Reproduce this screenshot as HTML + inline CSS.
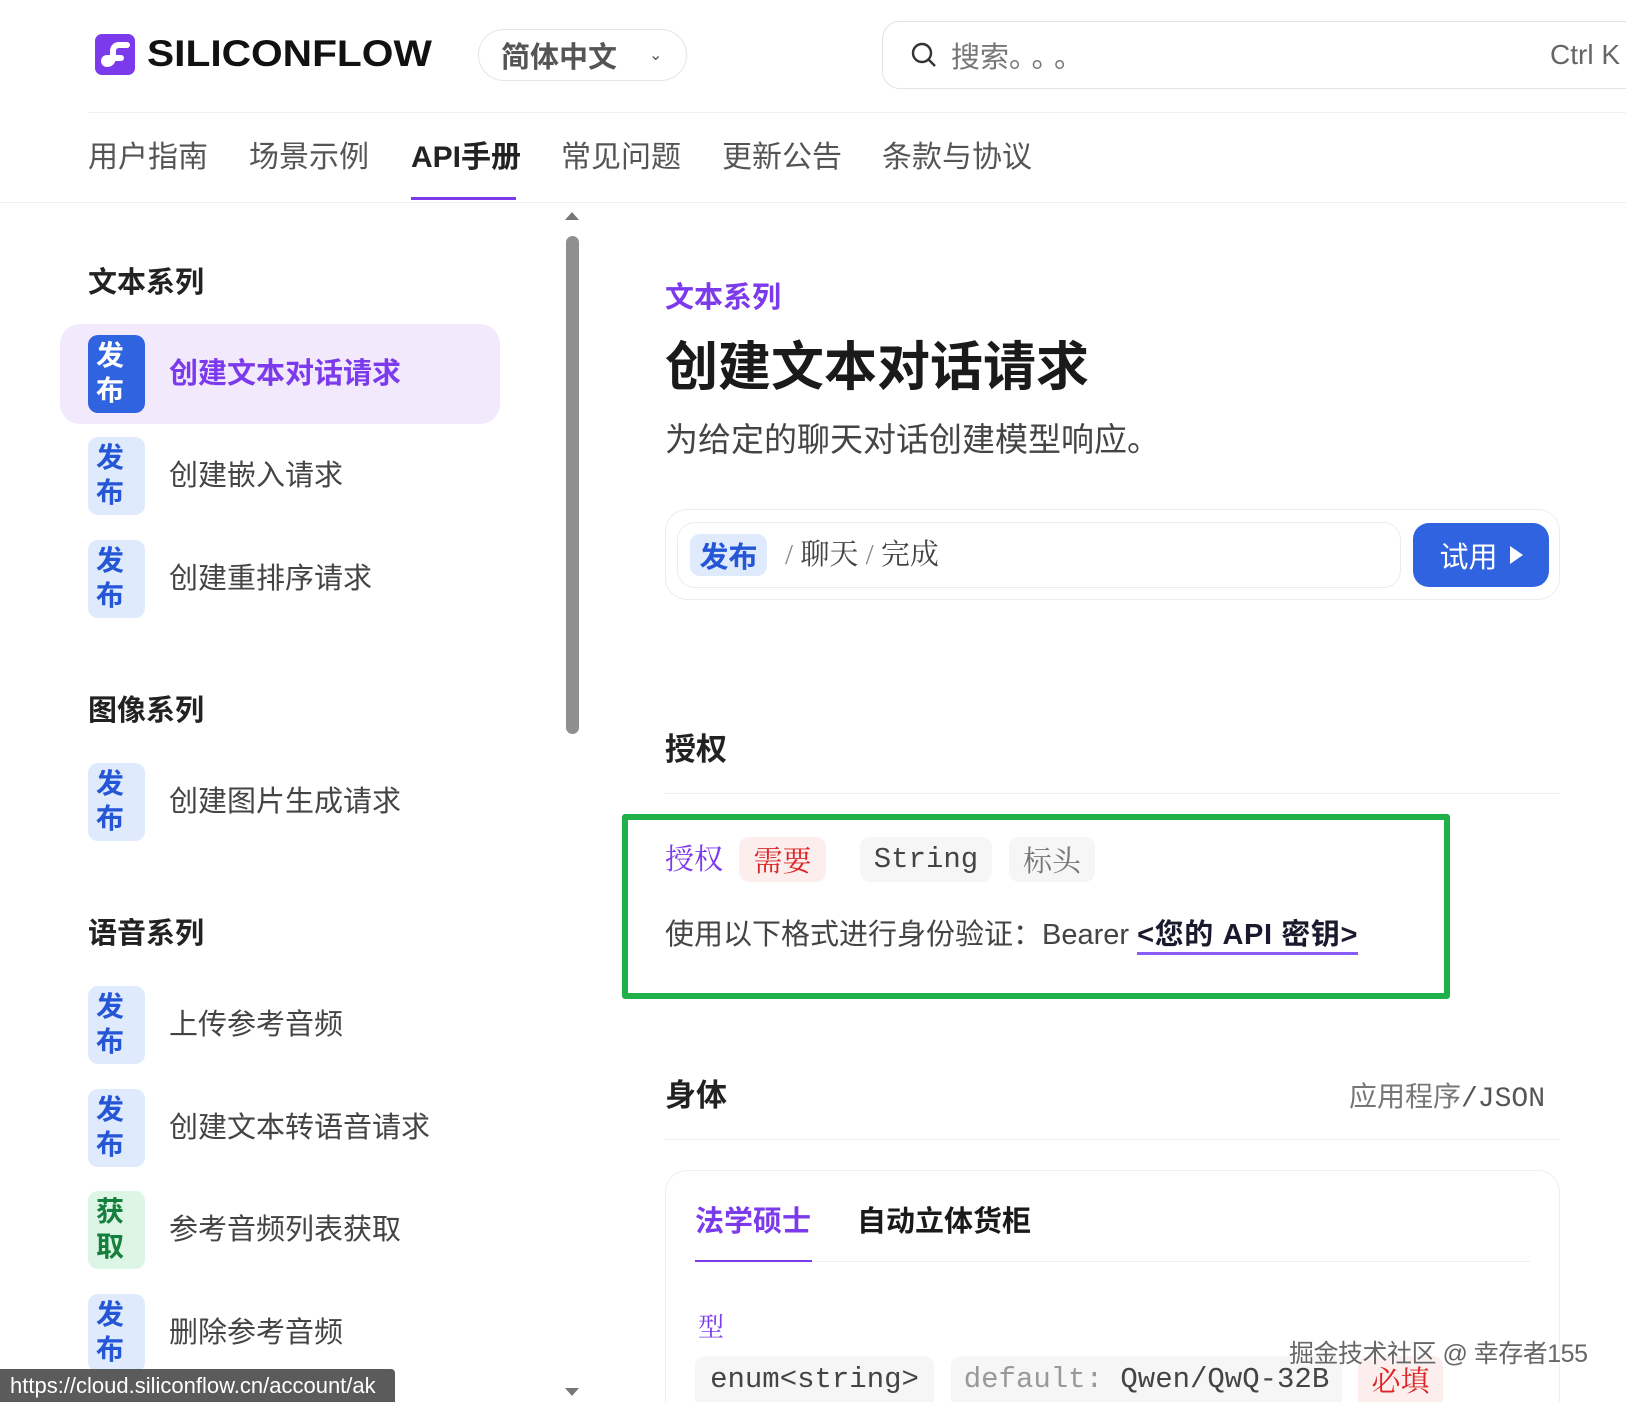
<!DOCTYPE html>
<html style="width:1626px;height:1402px;overflow:hidden"><head><meta charset="utf-8"><style>
*{margin:0;padding:0;box-sizing:border-box}
body{width:1626px;height:1402px;overflow:hidden;background:#fff;position:relative;font-family:"Liberation Sans","Noto Sans CJK SC",sans-serif;color:#333}
.a{position:absolute;white-space:nowrap}
.c{display:flex;align-items:center}
.badge{position:absolute;left:88px;width:57px;height:78px;border-radius:10px;background:#dfeafd;color:#2456d6;font-weight:700;font-size:28px;line-height:35px;text-align:left;padding-left:8px;padding-top:3px}
.item{position:absolute;left:169px;font-size:29px;color:#444;line-height:40px}
.sec{position:absolute;left:88px;font-size:29px;font-weight:700;color:#222;line-height:40px}
.mono{font-family:"Liberation Mono","DejaVu Sans Mono",monospace}
.pill{position:absolute;border-radius:10px;display:flex;align-items:center;justify-content:center}
</style></head><body>
<svg class="a" style="left:95px;top:34px" width="40" height="41" viewBox="0 0 40 41"><rect width="40" height="41" rx="7" fill="#7c3aed"/><path d="M32 11h-8c-4 0-6 3-6 6v6c0 4-2 7-6 7a3 3 0 1 1 0-6h14" fill="none" stroke="#fff" stroke-width="6" stroke-linecap="round"/></svg>
<div class="a" style="left:147px;top:31px;font-size:37px;font-weight:700;color:#111;line-height:46px;transform:scaleX(1.1);transform-origin:left">SILICONFLOW</div>
<div class="a c" style="left:478px;top:29px;width:209px;height:52px;border:1px solid #e5e5e5;border-radius:26px;padding-left:22px;font-size:29px;font-weight:700;color:#555">简体中文<span style="margin-left:32px;font-size:16px;font-weight:400">&#8964;</span></div>
<div class="a c" style="left:882px;top:21px;width:780px;height:68px;border:1px solid #e3e3e3;border-radius:18px;padding-left:28px;font-size:29px;color:#777">
<svg width="26" height="26" viewBox="0 0 26 26"><circle cx="11" cy="11" r="9" fill="none" stroke="#333" stroke-width="2.4"/><path d="M18 18l6 6" stroke="#333" stroke-width="2.4"/></svg>
<span style="margin-left:14px">搜索<span style="letter-spacing:8px">。。。</span></span><span style="position:absolute;left:667px;color:#666;font-size:28px">Ctrl K</span></div>
<div class="a" style="left:88px;top:112px;width:1538px;height:1px;background:#f0f0f0"></div>
<div class="a" style="left:88px;top:138px;font-size:30px;color:#555;line-height:40px">用户指南</div>
<div class="a" style="left:249px;top:138px;font-size:30px;color:#555;line-height:40px">场景示例</div>
<div class="a" style="left:411px;top:138px;font-size:30px;color:#222;font-weight:700;line-height:40px">API手册</div>
<div class="a" style="left:561px;top:138px;font-size:30px;color:#555;line-height:40px">常见问题</div>
<div class="a" style="left:722px;top:138px;font-size:30px;color:#555;line-height:40px">更新公告</div>
<div class="a" style="left:882px;top:138px;font-size:30px;color:#555;line-height:40px">条款与协议</div>
<div class="a" style="left:411px;top:197px;width:105px;height:3px;background:#7c3aed"></div>
<div class="a" style="left:0;top:202px;width:1626px;height:1px;background:#f0f0f0"></div>
<div class="sec" style="top:263px">文本系列</div>
<div class="a" style="left:60px;top:324px;width:440px;height:100px;border-radius:20px;background:#f3e9fd"></div>
<div class="badge" style="top:335px;background:#2f63e0;color:#fff">发<br>布</div>
<div class="item" style="top:354px;color:#7c3aed;font-weight:700">创建文本对话请求</div>
<div class="badge" style="top:437px">发<br>布</div><div class="item" style="top:456px">创建嵌入请求</div>
<div class="badge" style="top:540px">发<br>布</div><div class="item" style="top:559px">创建重排序请求</div>
<div class="sec" style="top:691px">图像系列</div>
<div class="badge" style="top:763px">发<br>布</div><div class="item" style="top:782px">创建图片生成请求</div>
<div class="sec" style="top:914px">语音系列</div>
<div class="badge" style="top:986px">发<br>布</div><div class="item" style="top:1005px">上传参考音频</div>
<div class="badge" style="top:1089px">发<br>布</div><div class="item" style="top:1108px">创建文本转语音请求</div>
<div class="badge" style="top:1191px;background:#dcf5e4;color:#15803d">获<br>取</div><div class="item" style="top:1210px">参考音频列表获取</div>
<div class="badge" style="top:1294px">发<br>布</div><div class="item" style="top:1313px">删除参考音频</div>
<div class="a" style="left:565px;top:212px;width:0;height:0;border-left:7px solid transparent;border-right:7px solid transparent;border-bottom:8px solid #777"></div>
<div class="a" style="left:566px;top:236px;width:13px;height:498px;border-radius:7px;background:#8f8f8f"></div>
<div class="a" style="left:565px;top:1388px;width:0;height:0;border-left:7px solid transparent;border-right:7px solid transparent;border-top:8px solid #777"></div>
<div class="a" style="left:665px;top:278px;font-size:29px;font-weight:700;color:#7c3aed;line-height:40px">文本系列</div>
<div class="a" style="left:665px;top:335px;font-size:53px;font-weight:700;color:#1a1a1a;line-height:66px">创建文本对话请求</div>
<div class="a" style="left:665px;top:419px;font-size:33px;color:#444;line-height:42px">为给定的聊天对话创建模型响应。</div>
<div class="a" style="left:665px;top:509px;width:895px;height:91px;border:1px solid #ececec;border-radius:22px"></div>
<div class="a" style="left:677px;top:522px;width:724px;height:66px;border:1px solid #ececec;border-radius:18px"></div>
<div class="pill" style="left:690px;top:534px;width:77px;height:42px;background:#dfeafd;color:#2456d6;font-weight:700;font-size:29px">发布</div>
<div class="a" style="left:785px;top:535px;font-size:29px;color:#444;line-height:40px;font-family:'Liberation Serif','Noto Serif CJK SC',serif"><span style="color:#888">/</span> 聊天 <span style="color:#888">/</span> 完成</div>
<div class="pill" style="left:1413px;top:523px;width:136px;height:64px;border-radius:16px;background:#2f63e0;color:#fff;font-size:29px">试用<span style="margin-left:12px;width:0;height:0;border-top:9px solid transparent;border-bottom:9px solid transparent;border-left:13px solid #fff"></span></div>
<div class="a" style="left:665px;top:730px;font-size:31px;font-weight:700;color:#222;line-height:40px">授权</div>
<div class="a" style="left:665px;top:793px;width:895px;height:1px;background:#efefef"></div>
<div class="a" style="left:622px;top:814px;width:828px;height:185px;border:6px solid #20b04a;border-radius:3px"></div>
<div class="a" style="left:665px;top:840px;font-size:29px;color:#7c3aed;line-height:40px;font-family:'Liberation Serif','Noto Serif CJK SC',serif">授权</div>
<div class="pill" style="left:739px;top:837px;width:87px;height:45px;background:#fdeeee;color:#dc2626;font-size:29px;font-family:'Liberation Serif','Noto Serif CJK SC',serif">需要</div>
<div class="pill mono" style="left:860px;top:837px;width:132px;height:45px;background:#f6f6f7;color:#444;font-size:29px">String</div>
<div class="pill" style="left:1009px;top:837px;width:86px;height:45px;background:#f6f6f7;color:#777;font-size:29px;font-family:'Liberation Serif','Noto Serif CJK SC',serif">标头</div>
<div class="a" style="left:665px;top:915px;font-size:29px;color:#444;line-height:40px">使用以下格式进行身份验证：Bearer <span style="font-weight:700;color:#1a1a2e;border-bottom:3px solid #8b5cf6;padding-bottom:1px;letter-spacing:0.6px">&lt;您的 API 密钥&gt;</span></div>
<div class="a" style="left:665px;top:1076px;font-size:31px;font-weight:700;color:#222;line-height:40px">身体</div>
<div class="a" style="right:81px;top:1077px;font-size:28px;color:#777;line-height:40px">应用程序<span class="mono" style="color:#555">/JSON</span></div>
<div class="a" style="left:665px;top:1139px;width:895px;height:1px;background:#efefef"></div>
<div class="a" style="left:665px;top:1170px;width:895px;height:232px;border:1px solid #efefef;border-bottom:none;border-radius:22px 22px 0 0"></div>
<div class="a" style="left:695px;top:1202px;font-size:29px;font-weight:700;color:#7c3aed;line-height:40px">法学硕士</div>
<div class="a" style="left:857px;top:1202px;font-size:29px;font-weight:700;color:#1a1a1a;line-height:40px">自动立体货柜</div>
<div class="a" style="left:695px;top:1261px;width:835px;height:1px;background:#efefef"></div>
<div class="a" style="left:695px;top:1260px;width:117px;height:2px;background:#7c3aed"></div>
<div class="a" style="left:698px;top:1308px;font-size:26px;color:#7c3aed;line-height:40px;font-family:'Liberation Serif','Noto Serif CJK SC',serif">型</div>
<div class="pill mono" style="left:695px;top:1356px;width:239px;height:46px;border-radius:10px 10px 0 0;background:#f6f6f7;color:#444;font-size:29px">enum&lt;string&gt;</div>
<div class="pill mono" style="left:951px;top:1356px;width:391px;height:46px;border-radius:10px 10px 0 0;background:#f6f6f7;color:#444;font-size:29px"><span style="color:#999">default:</span>&nbsp;Qwen/QwQ-32B</div>
<div class="pill" style="left:1358px;top:1356px;width:85px;height:46px;border-radius:10px 10px 0 0;background:#fdeeee;color:#dc2626;font-size:29px;font-family:'Liberation Serif','Noto Serif CJK SC',serif">必填</div>
<div class="a" style="left:1289px;top:1336px;font-size:25px;color:#666;line-height:36px;letter-spacing:-0.5px;text-shadow:0 0 2px #fff,0 0 2px #fff">掘金技术社区 @ 幸存者155</div>
<div class="a c" style="left:0;top:1369px;width:395px;height:33px;background:#5b5b5b;color:#fff;font-size:22px;padding-left:10px;border-top-right-radius:4px">https://cloud.siliconflow.cn/account/ak</div>
</body></html>
